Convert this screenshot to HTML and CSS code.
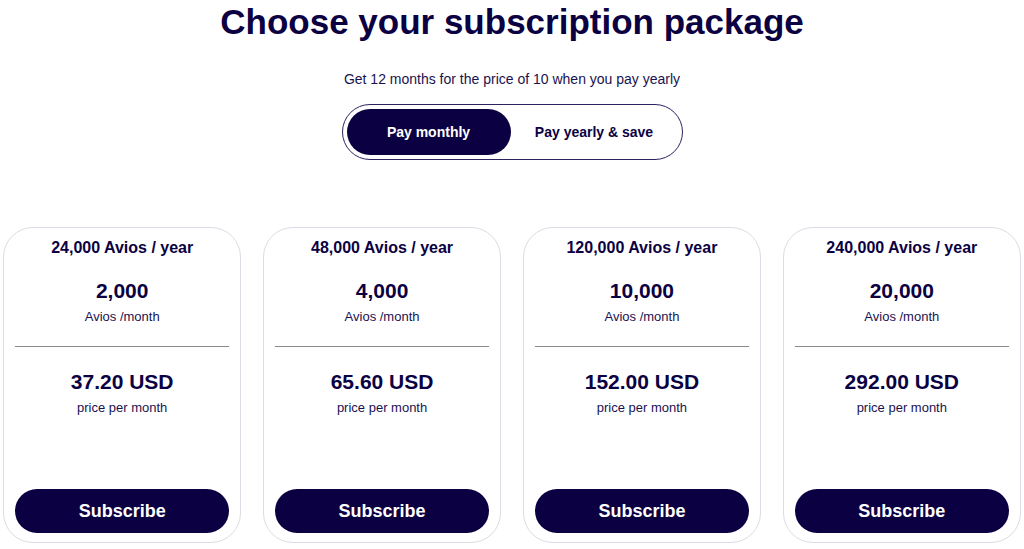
FILE: index.html
```html
<!DOCTYPE html>
<html lang="en">
<head>
<meta charset="UTF-8">
<meta name="viewport" content="width=device-width, initial-scale=1.0">
<title>Choose your subscription package</title>
<link rel="stylesheet" href="styles.css">
</head>
<body>
<div id="page">
    <h1>Choose your subscription package</h1>
    <p class="subtitle">Get 12 months for the price of 10 when you pay yearly</p>
    <div class="toggle">
        <button class="toggle-option active">Pay monthly</button>
        <button class="toggle-option">Pay yearly &amp; save</button>
    </div>

    <div class="plans">
        <div class="plan">
            <h3>24,000 Avios / year</h3>
            <div class="amount">2,000</div>
            <div class="unit">Avios /month</div>
            <hr>
            <div class="price">37.20 USD</div>
            <div class="unit">price per month</div>
            <button class="subscribe">Subscribe</button>
        </div>
        <div class="plan">
            <h3>48,000 Avios / year</h3>
            <div class="amount">4,000</div>
            <div class="unit">Avios /month</div>
            <hr>
            <div class="price">65.60 USD</div>
            <div class="unit">price per month</div>
            <button class="subscribe">Subscribe</button>
        </div>
        <div class="plan">
            <h3>120,000 Avios / year</h3>
            <div class="amount">10,000</div>
            <div class="unit">Avios /month</div>
            <hr>
            <div class="price">152.00 USD</div>
            <div class="unit">price per month</div>
            <button class="subscribe">Subscribe</button>
        </div>
        <div class="plan">
            <h3>240,000 Avios / year</h3>
            <div class="amount">20,000</div>
            <div class="unit">Avios /month</div>
            <hr>
            <div class="price">292.00 USD</div>
            <div class="unit">price per month</div>
            <button class="subscribe">Subscribe</button>
        </div>
    </div>
</div>
</body>
</html>
```

FILE: styles.css
```css
body {
    font-family: "Liberation Sans", Arial, sans-serif;
    color: #0b0142;
    background-color: #fff;
    margin: 0;
    padding: 0;
}

#page {
    display: flex;
    flex-direction: column;
    align-items: center;
    padding: 0 3px;
}

h1 {
    font-size: 35px;
    font-weight: bold;
    margin: 3px 0 0;
    line-height: 38px;
}

.subtitle {
    font-size: 14px;
    margin: 29px 0 0;
    line-height: 18px;
    color: #1a1250;
}

.toggle {
    display: flex;
    margin-top: 16px;
    padding: 4px;
    border: 1px solid #2a2360;
    border-radius: 28px;
    width: 331px;
}

.toggle-option {
    font-family: inherit;
    font-size: 14px;
    font-weight: bold;
    color: #0b0142;
    background: none;
    border: none;
    height: 46px;
    border-radius: 23px;
    cursor: pointer;
    flex: 1;
}

.toggle-option:first-child {
    flex: 0 0 164px;
}

.toggle-option.active {
    background-color: #0b0142;
    color: white;
}

.plans {
    display: grid;
    grid-template-columns: repeat(4, 1fr);
    gap: 21.5px;
    align-self: stretch;
    margin-top: 67px;
}

.plan {
    display: flex;
    flex-direction: column;
    align-items: center;
    height: 316px;
    padding: 0 11px 9px;
    border: 1px solid #dcdce4;
    border-radius: 30px;
    box-sizing: border-box;
}

.plan h3 {
    font-size: 16px;
    margin: 10px 0 0;
    line-height: 20px;
}

.amount {
    font-size: 21px;
    font-weight: bold;
    margin-top: 21px;
    line-height: 24px;
}

.price {
    font-size: 21px;
    font-weight: bold;
    margin-top: 23px;
    line-height: 24px;
}

.unit {
    font-size: 13px;
    margin-top: 6px;
    line-height: 16px;
    color: #1a1250;
}

.plan hr {
    width: 100%;
    border: none;
    border-top: 1px solid #8a8a8a;
    margin: 21px 0 0;
}

.subscribe {
    margin-top: auto;
    width: 100%;
    height: 44px;
    border: none;
    border-radius: 22px;
    background-color: #0b0142;
    color: white;
    font-family: inherit;
    font-size: 18px;
    font-weight: bold;
    cursor: pointer;
}
```
